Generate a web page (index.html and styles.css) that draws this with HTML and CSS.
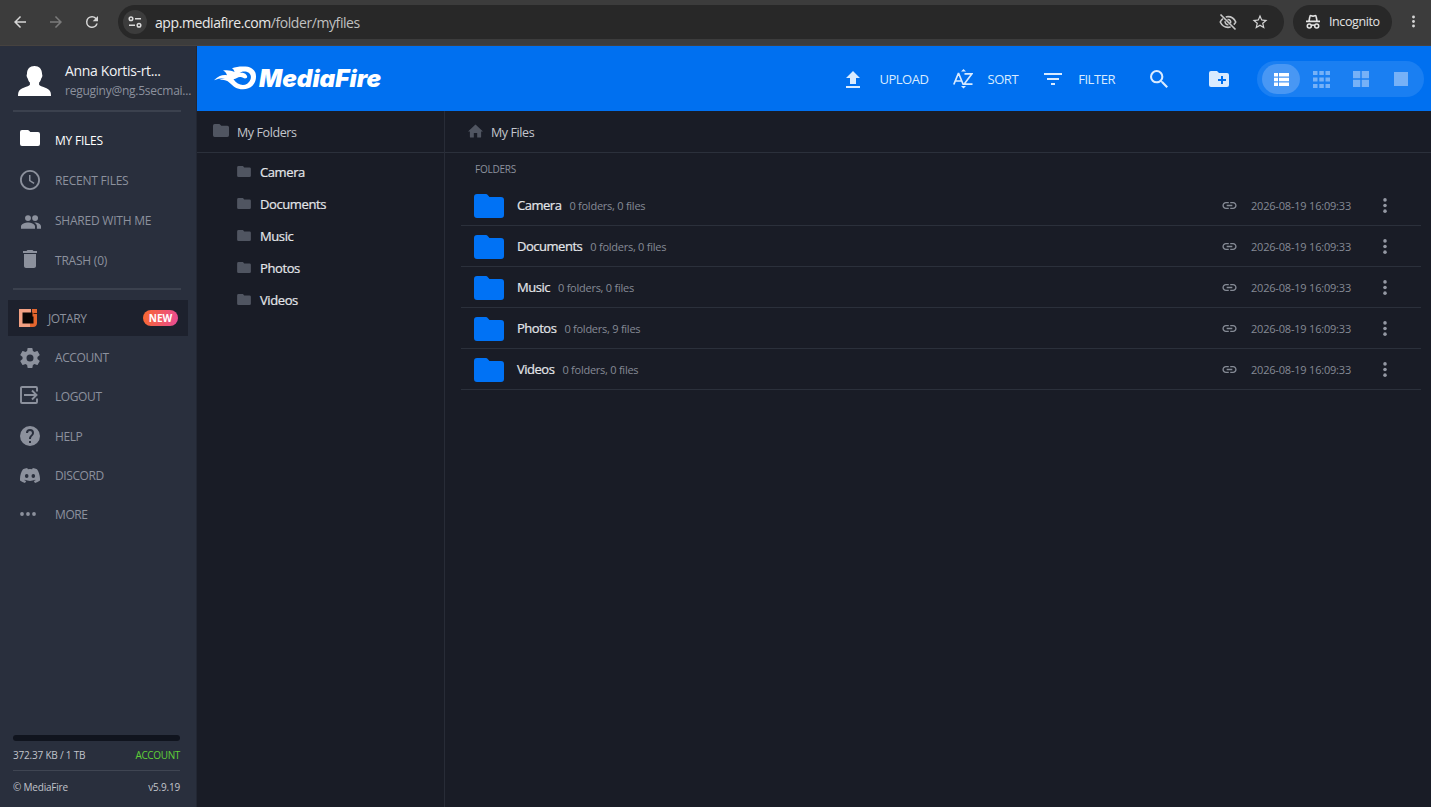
FILE: index.html
```html
<!DOCTYPE html>
<html lang="en">
<head>
  <meta charset="UTF-8">
  <meta name="viewport" content="width=device-width, initial-scale=1.0">
  <title>My Files</title>
  <link rel="stylesheet" href="styles.css">
</head>
<body>
  <svg class="sprite" aria-hidden="true">
    <symbol id="folder" viewBox="0 0 30 24"><path d="M3 0h8.500c1 0 1.600.3 2.200 1l1.800 2H27a3 3 0 0 1 3 3v15a3 3 0 0 1-3 3H3a3 3 0 0 1-3-3V3a3 3 0 0 1 3-3z"/></symbol>
    <symbol id="link" viewBox="0 0 24 24"><path d="M3.900 12c0-1.710 1.390-3.100 3.100-3.100h4V7H7c-2.760 0-5 2.240-5 5s2.240 5 5 5h4v-1.900H7c-1.710 0-3.100-1.390-3.100-3.100zM8 13h8v-2H8v2zm9-6h-4v1.900h4c1.710 0 3.100 1.390 3.100 3.100s-1.390 3.100-3.100 3.100h-4V17h4c2.760 0 5-2.240 5-5s-2.240-5-5-5z"/></symbol>
    <symbol id="dots" viewBox="0 0 4 16"><circle cx="2" cy="2" r="1.900"/><circle cx="2" cy="8" r="1.900"/><circle cx="2" cy="14" r="1.900"/></symbol>
  </svg>

  <div class="browser-bar">
    <svg class="nav-icon" viewBox="0 0 24 24"><path d="M20 11H7.830l5.590-5.590L12 4l-8 8 8 8 1.410-1.410L7.830 13H20z"/></svg>
    <svg class="nav-icon off" viewBox="0 0 24 24"><path d="M4 11h12.170l-5.590-5.590L12 4l8 8-8 8-1.410-1.410L16.170 13H4z"/></svg>
    <svg class="nav-icon" viewBox="0 0 24 24"><path d="M17.650 6.350A7.950 7.950 0 0 0 12 4a8 8 0 1 0 7.730 10h-2.080A6 6 0 1 1 12 6c1.660 0 3.140.69 4.220 1.780L13 11h7V4z"/></svg>
    <div class="url-bar">
      <span class="site-info">
        <svg viewBox="0 0 14 12"><g fill="none" stroke="#dcdcdc" stroke-width="1.500"><circle cx="3" cy="2.800" r="1.800"/><path d="M7 2.800h6M1 9.200h6"/><circle cx="11" cy="9.200" r="1.800"/></g></svg>
      </span>
      <span class="url">app.mediafire.com<span class="path">/folder/myfiles</span></span>
      <svg class="url-icon" viewBox="0 0 24 24"><g fill="none" stroke="#c7c7c7" stroke-width="2.200"><path d="M9 5.300c1-.3 2-.4 3-.4 4.600 0 8.400 2.900 10.300 7.100-.6 1.400-1.500 2.600-2.600 3.600M15.500 18.300c-1.100.5-2.300.8-3.500.8-4.600 0-8.400-2.900-10.300-7.100.8-1.800 2-3.300 3.500-4.500"/><path d="M2 2l20 20M15.300 13.500c.9-2.600-.8-5.200-4-4.800M8.300 11c-.6 2.500 1.500 5 4.200 4.700"/></g></svg>
      <svg class="url-icon" viewBox="0 0 24 24"><path fill="#d5d5d5" d="M22 9.240l-7.190-.62L12 2 9.190 8.630 2 9.240l5.460 4.730L5.820 21 12 17.270 18.180 21l-1.630-7.030L22 9.240zM12 15.400l-3.760 2.270 1-4.280-3.320-2.880 4.380-.38L12 6.100l1.710 4.040 4.380.38-3.320 2.880 1 4.280L12 15.400z"/></svg>
    </div>
    <div class="incognito">
      <svg viewBox="0 0 16 16"><g fill="none" stroke="#e3e3e3" stroke-width="1.600"><path d="M4 7l.9-4.600c.1-.7.7-.9 1.200-.7 1.200.5 2.600.5 3.800 0 .5-.2 1.100 0 1.200.7L12 7M1 7.400h14"/><circle cx="4.300" cy="12" r="2"/><circle cx="11.700" cy="12" r="2"/><path d="M6.300 11.600c1-.7 2.400-.7 3.400 0"/></g></svg>
      <span>Incognito</span>
    </div>
    <svg class="browser-menu"><use href="#dots"/></svg>
  </div>

  <div class="app">
    <div class="sidebar">
      <div class="profile">
        <svg class="avatar" viewBox="0 0 33 30"><path d="M16.500 0c4.700 0 7.500 3 7.500 7.500 0 1 .6 1.200.3 2.800-.2 1.300-.9 1.600-1.200 2.700-.5 1.800-1.200 2.800-2 3.600v2.200c1.300 2.400 9.800 2.500 11.400 7.200.4 1.200.5 2.500.5 4H0c0-1.500.1-2.800.5-4 1.600-4.700 10.100-4.800 11.400-7.200v-2.200c-.8-.8-1.500-1.800-2-3.600-.3-1.100-1-1.400-1.200-2.700-.3-1.600.3-1.800.3-2.800C9 3 11.800 0 16.500 0z"/></svg>
        <div class="profile-text">
          <div class="name">Anna Kortis-rt...</div>
          <div class="email">reguginy@ng.5secmai...</div>
        </div>
      </div>

      <div class="menu menu-main">
        <a class="active"><svg class="i-folder"><use href="#folder"/></svg><span>MY FILES</span></a>
        <a><svg viewBox="2 2 20 20"><path d="M11.990 2C6.470 2 2 6.480 2 12s4.470 10 9.990 10C17.520 22 22 17.520 22 12S17.520 2 11.990 2zM12 20.200a8.200 8.200 0 1 1 0-16.400 8.200 8.200 0 0 1 0 16.400zM12.500 7H11v6l4.700 3 .8-1.300-4-2.500z"/></svg><span>RECENT FILES</span></a>
        <a><svg class="i-users" viewBox="1 4 22 16"><path d="M16.500 11.500a3.200 3.200 0 1 0 0-6.500 3.200 3.200 0 0 0 0 6.500zM8.700 11.500a3.200 3.200 0 1 0 0-6.500 3.200 3.200 0 0 0 0 6.500zM8.700 13C6 13 1 14.400 1 17.200V20h15.400v-2.800C16.400 14.400 11.300 13 8.700 13zM16.500 13l-1 .1c1.600 1 3 2.300 3 4.100V20H23v-2.800c0-2.800-4-4.200-6.500-4.200z"/></svg><span>SHARED WITH ME</span></a>
        <a><svg class="i-trash" viewBox="5 3 14 18"><path d="M6 19c0 1.100.9 2 2 2h8c1.100 0 2-.9 2-2V7H6v12zM19 4h-3.500l-1-1h-5l-1 1H5v2h14V4z"/></svg><span>TRASH (0)</span></a>
      </div>

      <a class="jotary">
        <svg viewBox="0 0 18 18"><path fill="#f2a082" d="M0 0h12v4H4v10h7v4H0z"/><path fill="#e5662e" d="M13 0h5v14c0 2.500-1.500 4-4 4h-3v-4h2z"/><path fill="#0a0605" d="M3.500 3.500h10v4h1V5H18v-.8h-3.500V8v6.500h-11z"/></svg>
        <span>JOTARY</span>
        <b class="badge">NEW</b>
      </a>

      <div class="menu menu-more">
        <a><svg viewBox="2 2 20 20"><path d="M19.430 12.980c.04-.32.07-.64.07-.98s-.03-.66-.07-.98l2.110-1.650c.19-.15.24-.42.12-.64l-2-3.460c-.12-.22-.39-.3-.61-.22l-2.490 1c-.52-.4-1.080-.73-1.690-.98l-.38-2.650A.49.49 0 0 0 14 2h-4c-.25 0-.46.18-.49.42l-.38 2.650c-.61.25-1.170.59-1.690.98l-2.490-1c-.23-.09-.49 0-.61.22l-2 3.460c-.13.22-.07.49.12.64l2.110 1.650c-.04.32-.07.65-.07.98s.03.66.07.98l-2.110 1.650c-.19.15-.24.42-.12.64l2 3.460c.12.22.39.3.61.22l2.490-1c.52.4 1.080.73 1.690.98l.38 2.650c.03.24.24.42.49.42h4c.25 0 .46-.18.49-.42l.38-2.650c.61-.25 1.170-.59 1.690-.98l2.490 1c.23.09.49 0 .61-.22l2-3.460c.12-.22.07-.49-.12-.64zM12 15.500a3.500 3.500 0 1 1 0-7 3.500 3.500 0 0 1 0 7z"/></svg><span>ACCOUNT</span></a>
        <a><svg class="i-logout" viewBox="0 0 18 18"><g fill="none" stroke="#8c919d" stroke-width="1.900"><path d="M17 5.500V2a1 1 0 0 0-1-1H2a1 1 0 0 0-1 1v14a1 1 0 0 0 1 1h14a1 1 0 0 0 1-1v-3.500"/><path d="M4 9h12M12 4.500L16.500 9 12 13.500"/></g></svg><span>LOGOUT</span></a>
        <a><svg viewBox="2 2 20 20"><path d="M12 2a10 10 0 1 0 0 20 10 10 0 0 0 0-20zm1 17h-2v-2h2v2zm2.070-7.750l-.9.920C13.450 12.900 13 13.500 13 15h-2v-.5c0-1.100.45-2.100 1.170-2.830l1.240-1.260c.37-.36.59-.86.59-1.410a2 2 0 0 0-4 0H8a4 4 0 0 1 8 0c0 .88-.36 1.680-.93 2.250z"/></svg><span>HELP</span></a>
        <a><svg class="i-discord" viewBox="0 0 20 15"><path fill-rule="evenodd" d="M7.200 0C5.700.2 4.300.7 3 1.300.8 4.500-.2 8.300 0 12.500 1.600 13.700 3.200 14.500 5 15l1.200-1.900-1.800-.9.400-.4c3.300 1.500 7.100 1.500 10.400 0l.4.400-1.800.9L15 15c1.800-.5 3.400-1.300 5-2.500.2-4.200-.8-8-3-11.200C15.700.7 14.300.2 12.800 0l-.7 1.200a15 15 0 0 0-4.200 0zM6.700 6.100a1.800 2 0 1 0 0 4 1.800 2 0 0 0 0-4zM13.300 6.100a1.800 2 0 1 0 0 4 1.800 2 0 0 0 0-4z"/></svg><span>DISCORD</span></a>
        <a><svg class="i-more" viewBox="0 0 16 4"><circle cx="2" cy="2" r="1.900"/><circle cx="8" cy="2" r="1.900"/><circle cx="14" cy="2" r="1.900"/></svg><span>MORE</span></a>
      </div>

      <div class="storage">
        <div class="storage-bar"></div>
        <div class="storage-row"><span>372.37 KB / 1 TB</span><span class="upgrade">ACCOUNT</span></div>
        <div class="storage-row copy"><span>© MediaFire</span><span>v5.9.19</span></div>
      </div>
    </div>

    <div class="main">
      <div class="header">
        <svg class="logo" viewBox="0 0 170 30">
          <path fill-rule="evenodd" d="M1 16.200C5 12.500 9 10.500 14 11.200c-.8-2.200-2-3.600-4-4.600 5-.8 8.500.2 11.500 1.300-.5-1.700-1-2.500-2.500-3.600C23 2.500 28 2.200 32.500 2.500c7 .5 10.500 4.500 10.500 10.200 0 7-5 12.600-13 12.600-6.500 0-9.500-3-13.500-6.600-3-2.700-6.500-3.400-10-2.700 1.500-1 3.500-1.700 5.500-1.700-3.500-.5-7 .3-11 1.900zM20.500 15.300c3-.8 4.500-2.600 7-2.300 2.500.2 3.500 2 5.500 1.300 1.500-.5 1.600-2.100.4-3.400-1.800-2-4.400-2.300-6.900-1.900 2-2 6.500-2.200 9.300-.2 3.600 2.900 2.300 8.300-1.600 10.900-4.500 2.700-10.100.8-13.700-4.400z"/>
          <text x="46" y="23" textLength="122" lengthAdjust="spacingAndGlyphs">MediaFire</text>
        </svg>
        <div class="actions">
          <a><svg class="a-upload" viewBox="0 0 14 17"><path d="M7 0l7 7h-4v6H4V7H0zM0 15h14v2H0z"/></svg><span>UPLOAD</span></a>
          <a><svg class="a-sort" viewBox="0 0 20 20"><g fill="none" stroke="#d9ebff" stroke-width="1.700"><path d="M.8 15.500L5.300 4.500h.4L10.200 15.500M2.600 12h5.800M11.500 4.900h7.300l-7.600 10.200h8.300"/></g><path d="M10.500 0L13 2.500H8zM10.500 19.500L13 17H8z"/></svg><span>SORT</span></a>
          <a><svg class="a-filter" viewBox="0 0 18 12"><path d="M0 0h18v2H0zM3 5h12v2H3zM7 10h4v2H7z"/></svg><span>FILTER</span></a>
          <svg class="a-search" viewBox="3 3 17.500 17.500"><path d="M15.500 14h-.79l-.28-.27A6.470 6.470 0 0 0 16 9.500 6.500 6.500 0 1 0 9.500 16c1.610 0 3.090-.59 4.230-1.570l.27.28v.79l5 4.990L20.490 19l-4.990-5zm-6 0a4.500 4.500 0 1 1 0-9 4.500 4.500 0 0 1 0 9z"/></svg>
          <svg class="a-newfolder" viewBox="0 0 20 16"><path d="M2 0h6l2 2h8a2 2 0 0 1 2 2v10a2 2 0 0 1-2 2H2a2 2 0 0 1-2-2V2a2 2 0 0 1 2-2z"/><path fill="#0070f0" d="M12 5h2v3h3v2h-3v3h-2v-3H9V8h3z"/></svg>
        </div>
        <div class="views">
          <span class="selected"><svg class="v-list" viewBox="0 0 15 13"><path d="M0 0h4v3.500H0zM5 0h10v3.500H5zM0 4.700h4v3.500H0zM5 4.700h10v3.500H5zM0 9.400h4v3.500H0zM5 9.400h10v3.500H5z"/></svg></span>
          <span><svg viewBox="0 0 17 17"><path d="M0 0h4.500v4H0zM6.300 0h4.500v4H6.300zM12.500 0H17v4h-4.500zM0 6.500h4.500v4H0zM6.300 6.500h4.500v4H6.300zM12.500 6.500H17v4h-4.500zM0 13h4.500v4H0zM6.300 13h4.500v4H6.300zM12.500 13H17v4h-4.500z"/></svg></span>
          <span><svg class="v-grid" viewBox="0 0 16 16"><path d="M0 0h7.300v7.300H0zM8.700 0H16v7.300H8.700zM0 8.700h7.300V16H0zM8.700 8.700H16V16H8.700z"/></svg></span>
          <span><svg class="v-big" viewBox="0 0 14 14"><path d="M0 0h14v14H0z"/></svg></span>
        </div>
      </div>

      <div class="content">
        <div class="tree">
          <div class="crumb"><svg class="c-folder"><use href="#folder"/></svg><span>My Folders</span></div>
          <ul>
            <li><svg><use href="#folder"/></svg>Camera</li>
            <li><svg><use href="#folder"/></svg>Documents</li>
            <li><svg><use href="#folder"/></svg>Music</li>
            <li><svg><use href="#folder"/></svg>Photos</li>
            <li><svg><use href="#folder"/></svg>Videos</li>
          </ul>
        </div>
        <div class="files">
          <div class="crumb"><svg class="c-home" viewBox="0 0 16 14"><path d="M8 0l8 7.500h-2V13a1 1 0 0 1-1 1H9.800V9H6.200v5H3a1 1 0 0 1-1-1V7.500H0z"/></svg><span>My Files</span></div>
          <div class="section-title">FOLDERS</div>
          <div class="rows">
            <div class="row"><svg class="r-folder"><use href="#folder"/></svg><span class="title">Camera</span><span class="info">0 folders, 0 files</span><svg class="r-link"><use href="#link"/></svg><span class="date">2026-08-19 16:09:33</span><svg class="r-dots"><use href="#dots"/></svg></div>
            <div class="row"><svg class="r-folder"><use href="#folder"/></svg><span class="title">Documents</span><span class="info">0 folders, 0 files</span><svg class="r-link"><use href="#link"/></svg><span class="date">2026-08-19 16:09:33</span><svg class="r-dots"><use href="#dots"/></svg></div>
            <div class="row"><svg class="r-folder"><use href="#folder"/></svg><span class="title">Music</span><span class="info">0 folders, 0 files</span><svg class="r-link"><use href="#link"/></svg><span class="date">2026-08-19 16:09:33</span><svg class="r-dots"><use href="#dots"/></svg></div>
            <div class="row"><svg class="r-folder"><use href="#folder"/></svg><span class="title">Photos</span><span class="info">0 folders, 9 files</span><svg class="r-link"><use href="#link"/></svg><span class="date">2026-08-19 16:09:33</span><svg class="r-dots"><use href="#dots"/></svg></div>
            <div class="row"><svg class="r-folder"><use href="#folder"/></svg><span class="title">Videos</span><span class="info">0 folders, 0 files</span><svg class="r-link"><use href="#link"/></svg><span class="date">2026-08-19 16:09:33</span><svg class="r-dots"><use href="#dots"/></svg></div>
          </div>
        </div>
      </div>
    </div>
  </div>
</body>
</html>
```
FILE: styles.css
```css
* {
  box-sizing: border-box;
}
body {
  margin: 0;
  height: 807px;
  display: flex;
  flex-direction: column;
  overflow: hidden;
  background: #191c26;
  color: #e4e6ea;
  font-family: "Open Sans", "Noto Sans", sans-serif;
  font-size: 13px;
}
svg {
  display: block;
  flex: none;
  fill: currentColor;
}
.sprite {
  display: none;
}
span {
  white-space: nowrap;
}

/* browser bar */
.browser-bar {
  height: 46px;
  flex: none;
  display: flex;
  align-items: center;
  padding: 0 14px 2px 12px;
  background: #3c3c3c;
  border-bottom: 1px solid #46423f;
  color: #d6d6d6;
}
.nav-icon {
  width: 18px;
  height: 18px;
  margin: 0 18px 0 -1px;
}
.nav-icon + .nav-icon {
  margin-left: 0;
}
.nav-icon.off {
  color: #7b7b7b;
}
.url-bar {
  width: 1166px;
  height: 34px;
  margin-left: -1px;
  padding: 0 15px 0 5px;
  border-radius: 17px;
  background: #282828;
  display: flex;
  align-items: center;
}
.site-info {
  width: 24px;
  height: 24px;
  border-radius: 50%;
  background: #3c3c3c;
  display: flex;
  align-items: center;
  justify-content: center;
}
.site-info svg {
  width: 14px;
  height: 12px;
}
.url {
  flex: 1;
  margin-left: 8px;
  padding-top: 1px;
  font-size: 14px;
  letter-spacing: -0.42px;
  color: #e8e8e8;
}
.url .path {
  color: #c0c0c0;
}
.url-icon {
  width: 18px;
  height: 18px;
  margin-left: 14px;
}
.incognito {
  width: 99px;
  height: 34px;
  margin-left: 9px;
  padding-left: 12px;
  border-radius: 17px;
  background: #282828;
  display: flex;
  align-items: center;
  gap: 8px;
  font-size: 12.5px;
  letter-spacing: -0.4px;
  color: #e3e3e3;
}
.incognito svg {
  width: 16px;
  height: 16px;
}
.browser-menu {
  width: 3px;
  height: 13px;
  margin-left: 20px;
}

.app {
  flex: 1;
  display: flex;
  min-height: 0;
}

/* sidebar */
.sidebar {
  width: 197px;
  flex: none;
  display: flex;
  flex-direction: column;
  background: #292f3d;
  border-right: 1px solid #222733;
  color: #8c919d;
}
.profile {
  height: 66px;
  margin: 0 0 0 13px;
  padding: 14px 0 0 5px;
  display: flex;
  gap: 14px;
}
.avatar {
  width: 33px;
  height: 30px;
  margin-top: 6px;
  color: #fff;
}
.name {
  font-size: 14px;
  line-height: 21px;
  letter-spacing: -0.35px;
  color: #f1f2f4;
}
.email {
  font-size: 12px;
  line-height: 20px;
  letter-spacing: -0.25px;
}
.menu {
  display: flex;
  flex-direction: column;
}
.menu-main {
  margin: -2px 15px 0 13px;
  padding: 8px 0;
  border-top: 2px solid #3b414e;
  border-bottom: 2px solid #3b414e;
}
.menu a {
  height: 40px;
  padding-left: 7px;
  display: flex;
  align-items: center;
}
.menu svg {
  width: 20px;
  height: 20px;
  margin-right: 15px;
}
.menu span,
.jotary span {
  font-size: 12px;
  letter-spacing: -0.4px;
}
.menu-main span {
  letter-spacing: -0.22px;
}
.menu .active {
  color: #fff;
}
.menu .i-folder {
  height: 16px;
  margin-top: -4px;
}
.menu .i-users {
  height: 15px;
  margin: 3px 14px 0 1px;
}
.menu .i-trash {
  width: 14px;
  height: 18px;
  margin: -3px 18px 0 3px;
}
.jotary {
  height: 36px;
  margin: 10px 8px 2px;
  padding: 0 10px 0 11px;
  display: flex;
  align-items: center;
  background: #1d212d;
}
.jotary svg {
  width: 18px;
  height: 18px;
  margin-right: 11px;
}
.badge {
  margin-left: auto;
  width: 35px;
  height: 16px;
  border-radius: 8px;
  background: linear-gradient(100deg, #f9692f, #e94b95);
  color: #fff;
  font-size: 10px;
  line-height: 16px;
  text-align: center;
}
.menu-more {
  padding-left: 13px;
}
.menu-more a {
  height: 39.300px;
}
.menu .i-logout {
  width: 18px;
  height: 18px;
  margin: -3px 17px 0 0;
}
.menu .i-discord {
  height: 15px;
}
.menu .i-more {
  width: 16px;
  height: 4px;
  margin: -1px 19px 0 0;
}
.storage {
  margin: auto 16px 0 13px;
  font-size: 10px;
  letter-spacing: -0.2px;
  color: #c1c4cb;
}
.storage-bar {
  height: 6px;
  border-radius: 3px;
  background: #10141e;
}
.storage-row {
  height: 29px;
  padding-bottom: 2px;
  display: flex;
  justify-content: space-between;
  align-items: center;
}
.storage-row.copy {
  height: 37px;
  padding-bottom: 5px;
  border-top: 1px solid #3f4552;
}
.upgrade {
  color: #5fd038;
  letter-spacing: -0.35px;
}

/* header */
.main {
  flex: 1;
  display: flex;
  flex-direction: column;
}
.header {
  height: 65px;
  flex: none;
  display: flex;
  align-items: center;
  padding: 1px 7px 0 16px;
  background: #0070f0;
  color: #d9ebff;
}
.logo {
  width: 170px;
  height: 30px;
  color: #fff;
}
.logo text {
  font-family: Inter, "Liberation Sans", sans-serif;
  font-size: 24px;
  font-weight: 900;
  font-style: italic;
}
.actions {
  margin-left: auto;
  display: flex;
  align-items: center;
}
.actions a {
  display: flex;
  align-items: center;
}
.actions span {
  font-size: 13px;
  letter-spacing: -0.45px;
}
.a-upload {
  width: 14px;
  height: 17px;
  margin-right: 19px;
}
.a-sort {
  width: 20px;
  height: 20px;
  margin: 0 15px 0 24px;
}
.a-filter {
  width: 18px;
  height: 12px;
  margin: 0 16px 0 26px;
}
.a-search {
  width: 18px;
  height: 18px;
  margin: -1px 0 0 35px;
}
.a-newfolder {
  width: 20px;
  height: 16px;
  margin-left: 41px;
}
.views {
  width: 167px;
  height: 36px;
  margin-left: 28px;
  padding-left: 5px;
  border-radius: 18px;
  background: #1a7ff2;
  display: flex;
  align-items: center;
  color: #76b1f7;
}
.views span {
  width: 38px;
  height: 30px;
  margin-right: 2px;
  border-radius: 15px;
  display: flex;
  align-items: center;
  justify-content: center;
}
.views .selected {
  background: #4897f4;
  color: #fff;
}
.views svg {
  width: 17px;
  height: 17px;
}
.views .v-list {
  width: 15px;
  height: 13px;
}
.views .v-grid {
  width: 16px;
  height: 16px;
}
.views .v-big {
  width: 14px;
  height: 14px;
}

/* content */
.content {
  flex: 1;
  display: flex;
}
.tree {
  width: 248px;
  border-right: 1px solid #282c37;
}
.crumb {
  height: 42px;
  display: flex;
  align-items: center;
  border-bottom: 1px solid #2b303b;
  font-size: 12.500px;
  letter-spacing: -0.4px;
  color: #c3c6cc;
}
.crumb span {
  padding-top: 2px;
}
.crumb svg {
  color: #505561;
  margin-top: -2px;
}
.c-folder {
  width: 16px;
  height: 13px;
  margin: 0 8px 0 16px;
}
.c-home {
  width: 15px;
  height: 14px;
  margin: 0 8px 0 23px;
}
.tree ul {
  margin: 0;
  padding: 3px 0 0 40px;
  list-style: none;
}
.tree li {
  height: 32px;
  display: flex;
  align-items: center;
  font-weight: 500;
  letter-spacing: -0.4px;
  -webkit-text-stroke: 0.2px;
}
.tree li svg {
  width: 14px;
  height: 11px;
  margin: -2px 9px 0 0;
  color: #505561;
}
.files {
  flex: 1;
}
.section-title {
  height: 32px;
  padding-left: 30px;
  font-size: 10px;
  font-weight: 500;
  line-height: 33px;
  letter-spacing: -0.25px;
  color: #8c919d;
}
.rows {
  margin: 0 10px 0 16px;
}
.row {
  height: 41px;
  display: flex;
  align-items: center;
  padding-left: 13px;
  border-bottom: 1px solid #2b303b;
}
.r-folder {
  width: 30px;
  height: 24px;
  margin-top: 1px;
  color: #0072f5;
}
.title {
  margin-left: 13px;
  font-weight: 500;
  letter-spacing: -0.48px;
  -webkit-text-stroke: 0.2px;
}
.info {
  flex: 1;
  margin: 1px 0 0 8px;
  font-size: 11px;
  letter-spacing: -0.25px;
  color: #858a95;
}
.r-link {
  width: 17px;
  height: 17px;
  color: #858a95;
}
.date {
  width: 100px;
  margin: 1px 32px 0 13px;
  font-size: 11px;
  letter-spacing: -0.2px;
  color: #858a95;
}
.r-dots {
  width: 4px;
  height: 15px;
  margin-right: 34px;
  color: #9498a3;
}
```
